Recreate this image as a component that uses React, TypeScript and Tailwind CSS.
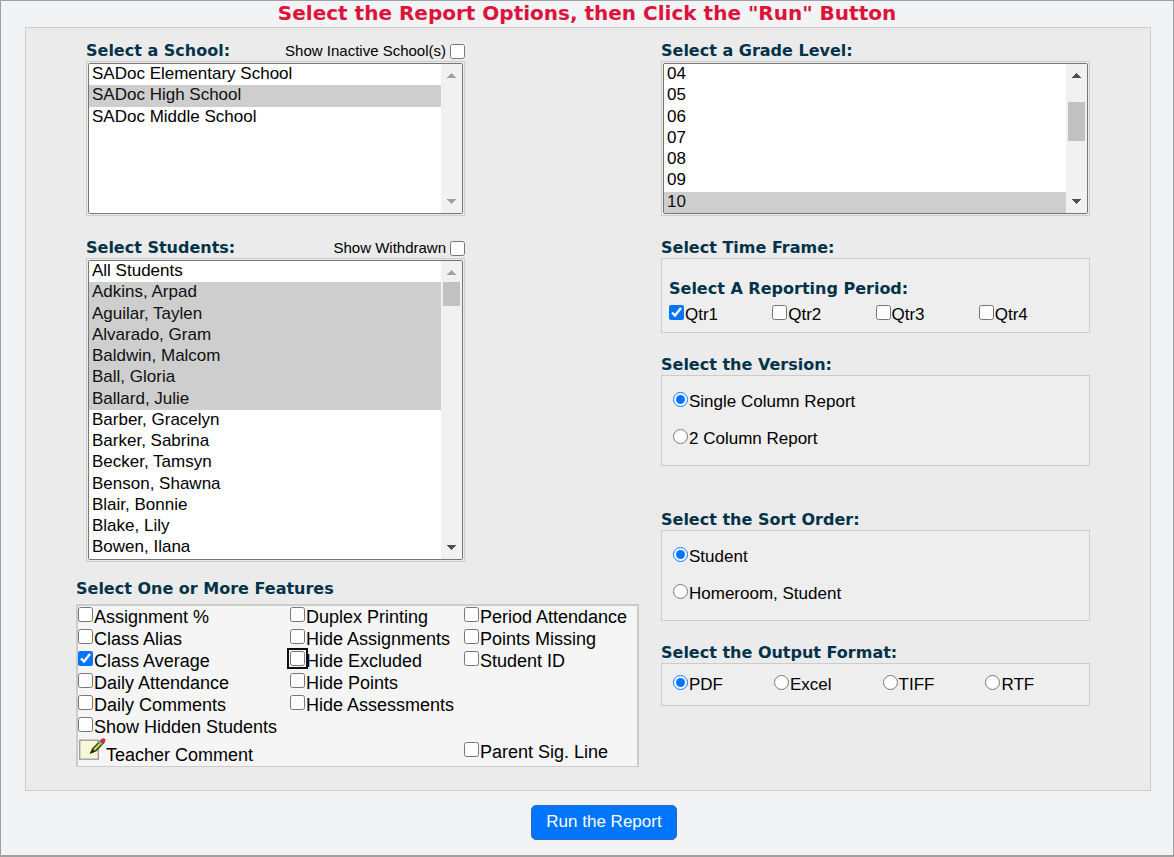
import React, { useId } from "react";

type ScrollState = { up: boolean; down: boolean; thumb?: string };

function Arrow({ down = false, active }: { down?: boolean; active: boolean }) {
  return (
    <svg width="9" height="5" viewBox="0 0 9 5" shapeRendering="crispEdges" className={active ? "text-[#505050]" : "text-[#a3a3a3]"}>
      <path d={down ? "M0 0h9L4.5 5z" : "M0 5h9L4.5 0z"} fill="currentColor" />
    </svg>
  );
}

function ListBox({
  id,
  options,
  selected,
  size,
  height,
  scroll,
}: {
  id: string;
  options: string[];
  selected: string[];
  size: number;
  height: string;
  scroll: ScrollState;
}) {
  return (
    <div className="border border-[#cccccc] p-px">
      <div className="flex overflow-hidden rounded-xs border border-[#767676] bg-white">
        <select
          id={id}
          multiple
          size={size}
          defaultValue={selected}
          className={`${height} min-w-0 flex-1 appearance-none overflow-hidden bg-white text-[17px] text-black outline-none [scrollbar-width:none]`}
        >
          {options.map((o) => (
            <option key={o} value={o} className="min-h-[1.25em] pl-[3px]">
              {o}
            </option>
          ))}
        </select>
        <div aria-hidden="true" className="flex w-[21px] flex-col items-center justify-between bg-[#f1f1f1] pt-[9px] pb-[9px]">
          <div className="flex flex-col items-center">
            <Arrow active={scroll.up} />
            {scroll.thumb && <div className={scroll.thumb} />}
          </div>
          <Arrow down active={scroll.down} />
        </div>
      </div>
    </div>
  );
}

const HEADING = "pt-0.5 font-['DejaVu_Sans'] text-[16px] leading-5 font-bold text-[#003349]";

function Choice({
  type,
  name,
  label,
  checked = false,
  ring = false,
}: {
  type: "checkbox" | "radio";
  name?: string;
  label: string;
  checked?: boolean;
  ring?: boolean;
}) {
  const id = useId();
  return (
    <div className="flex items-start">
      <input
        id={id}
        type={type}
        name={name}
        defaultChecked={checked}
        className={
          ring
            ? "mt-px size-[15px] shrink-0 rounded-[3px] outline-2 outline-offset-1 outline-[#101010] accent-[#0075ff]"
            : "mt-px size-[15px] shrink-0 accent-[#0075ff]"
        }
      />
      <label htmlFor={id} className="pl-px whitespace-nowrap">
        {label}
      </label>
    </div>
  );
}

function ListHeading({ htmlFor, title, toggle }: { htmlFor: string; title: string; toggle: string }) {
  const id = useId();
  return (
    <div className="flex items-center justify-between">
      <label htmlFor={htmlFor} className={HEADING}>
        {title}
      </label>
      <span className="flex items-center gap-1 pt-0.5">
        <label htmlFor={id} className="text-[15px] leading-5">
          {toggle}
        </label>
        <input id={id} type="checkbox" className="size-[15px]" />
      </span>
    </div>
  );
}

function NoteIcon() {
  return (
    <svg width="28" height="24" viewBox="0 0 28 24" aria-hidden="true">
      <rect x="1.7" y="2.2" width="18.6" height="19" fill="#f8f8d8" stroke="#a0a0a0" strokeWidth="1.4" />
      <path d="M12 15.6l2.2-5.400L22.800 1.400l4.400 2.600-9 9.400z" fill="#26402c" />
      <path d="M15.200 11.200l6.400-6.800 2.200 1.200-6.800 7z" fill="#d2d634" />
      <path d="M21.600 2.800L24.400.4c1.300-.8 3.700.6 3.100 2.200l-2.900 3.200z" fill="#dc2836" />
      <path d="M20.300 4.300l1.300-1.500 3 3-1.300 1.300z" fill="#a0a8a4" />
      <path d="M13.900 12.100l2.400 2-4.500 2z" fill="#1c1c1c" />
    </svg>
  );
}

const FEATURES: { label: string; checked?: boolean; ring?: boolean }[][] = [
  [
    { label: "Assignment %" },
    { label: "Class Alias" },
    { label: "Class Average", checked: true },
    { label: "Daily Attendance" },
    { label: "Daily Comments" },
    { label: "Show Hidden Students" },
  ],
  [
    { label: "Duplex Printing" },
    { label: "Hide Assignments" },
    { label: "Hide Excluded", ring: true },
    { label: "Hide Points" },
    { label: "Hide Assessments" },
  ],
  [{ label: "Period Attendance" }, { label: "Points Missing" }, { label: "Student ID" }],
];

const STUDENTS = [
  "All Students",
  "Adkins, Arpad",
  "Aguilar, Taylen",
  "Alvarado, Gram",
  "Baldwin, Malcom",
  "Ball, Gloria",
  "Ballard, Julie",
  "Barber, Gracelyn",
  "Barker, Sabrina",
  "Becker, Tamsyn",
  "Benson, Shawna",
  "Blair, Bonnie",
  "Blake, Lily",
  "Bowen, Ilana",
];

const BOX = "border border-[#cccccc] bg-[#eeeeee] text-[17px] leading-[22px]";

export default function App() {
  return (
    <main className="min-h-screen border border-b-2 border-[#9f9f9f] bg-[#f1f3f5] font-['Liberation_Sans',sans-serif] text-black">
      <h1 className="pb-0.5 text-center font-['DejaVu_Sans'] text-[20px] leading-6 font-bold text-[#dc143c]">
        Select the Report Options, then Click the "Run" Button
      </h1>
      <form onSubmit={(e) => e.preventDefault()}>
        <div className="mr-[22px] ml-6 grid grid-cols-[563fr_429fr] items-start gap-x-[22px] border border-[#cccccc] bg-[#ebebeb] pt-[11px] pr-[60px] pb-[23px] pl-[50px]">
          <div>
            <div className="ml-2.5 flex w-[379px] max-w-full flex-col gap-5">
              <section>
                <ListHeading htmlFor="school" title="Select a School:" toggle="Show Inactive School(s)" />
                <ListBox
                  id="school"
                  size={7}
                  height="h-[149px]"
                  options={["SADoc Elementary School", "SADoc High School", "SADoc Middle School"]}
                  selected={["SADoc High School"]}
                  scroll={{ up: false, down: false }}
                />
              </section>
              <section>
                <ListHeading htmlFor="students" title="Select Students:" toggle="Show Withdrawn" />
                <ListBox
                  id="students"
                  size={14}
                  height="h-[298px]"
                  options={STUDENTS}
                  selected={STUDENTS.slice(1, 7)}
                  scroll={{ up: false, down: true, thumb: "mt-[7px] h-6 w-[17px] bg-[#c1c1c1]" }}
                />
              </section>
            </div>
            <section className="mt-[15px]">
              <h2 className={HEADING}>Select One or More Features</h2>
              <div className="mt-[5px] border-2 border-b border-[#cccccc] bg-[#f5f5f5] text-[18px] leading-[22px]">
                <div className="grid grid-cols-[212px_174px_1fr]">
                  {FEATURES.map((column, i) => (
                    <div key={i}>
                      {column.map((f) => (
                        <Choice key={f.label} type="checkbox" {...f} />
                      ))}
                    </div>
                  ))}
                </div>
                <div className="grid h-7 grid-cols-[386px_1fr]">
                  <button type="button" className="flex items-end text-left">
                    <span className="self-start">
                      <NoteIcon />
                    </span>
                    Teacher Comment
                  </button>
                  <div className="pt-[3px]">
                    <Choice type="checkbox" label="Parent Sig. Line" />
                  </div>
                </div>
              </div>
            </section>
          </div>

          <div>
            <section>
              <label htmlFor="grade" className={`block ${HEADING}`}>
                Select a Grade Level:
              </label>
              <ListBox
                id="grade"
                size={7}
                height="h-[149px]"
                options={["04", "05", "06", "07", "08", "09", "10"]}
                selected={["10"]}
                scroll={{ up: true, down: true, thumb: "mt-6 h-[39px] w-[17px] bg-[#c1c1c1]" }}
              />
            </section>
            <section className="mt-5">
              <h2 className={HEADING}>Select Time Frame:</h2>
              <div className={`${BOX} px-[7px] pt-[18px] pb-1.5`}>
                <h3 className={HEADING}>Select A Reporting Period:</h3>
                <div className="grid grid-cols-4 pt-[5px]">
                  <Choice type="checkbox" label="Qtr1" checked />
                  <Choice type="checkbox" label="Qtr2" />
                  <Choice type="checkbox" label="Qtr3" />
                  <Choice type="checkbox" label="Qtr4" />
                </div>
              </div>
            </section>
            <section className="mt-5">
              <h2 className={HEADING}>Select the Version:</h2>
              <div className={`${BOX} flex flex-col gap-[15px] px-[11px] pt-[15px] pb-[15px]`}>
                <Choice type="radio" name="version" label="Single Column Report" checked />
                <Choice type="radio" name="version" label="2 Column Report" />
              </div>
            </section>
            <section className="mt-[42px]">
              <h2 className={HEADING}>Select the Sort Order:</h2>
              <div className={`${BOX} flex flex-col gap-[15px] px-[11px] pt-[15px] pb-[15px]`}>
                <Choice type="radio" name="sort" label="Student" checked />
                <Choice type="radio" name="sort" label="Homeroom, Student" />
              </div>
            </section>
            <section className="mt-5">
              <h2 className={HEADING}>Select the Output Format:</h2>
              <div className={`${BOX} flex gap-[51px] px-[11px] pt-2.5 pb-[9px]`}>
                <Choice type="radio" name="format" label="PDF" checked />
                <Choice type="radio" name="format" label="Excel" />
                <Choice type="radio" name="format" label="TIFF" />
                <Choice type="radio" name="format" label="RTF" />
              </div>
            </section>
          </div>
        </div>
        <div className="flex justify-center py-3.5 pl-[34px]">
          <button type="submit" className="h-[35px] rounded-[5px] border border-[#2b6cb0] bg-[#0075ff] px-3.5 pb-0.5 text-[17px] leading-5 text-white">
            Run the Report
          </button>
        </div>
      </form>
    </main>
  );
}
